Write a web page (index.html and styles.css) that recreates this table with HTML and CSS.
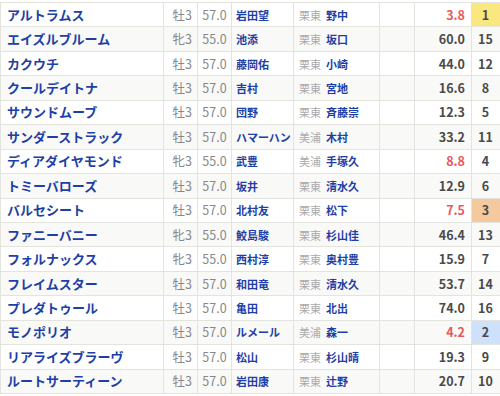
FILE: index.html
```html
<!DOCTYPE html>
<html lang="ja">
<head>
<meta charset="utf-8">
<link rel="stylesheet" href="styles.css">
</head>
<body>
<div class="wrap">
<table class="entries">
<colgroup>
<col class="c-name"><col class="c-sex"><col class="c-wt"><col class="c-jk"><col class="c-tr"><col class="c-blank"><col class="c-odds"><col class="c-pop">
</colgroup>
<tbody>
<tr><td class="name">アルトラムス</td><td class="sex">牡3</td><td class="wt">57.0</td><td class="jk">岩田望</td><td class="tr"><span class="loc">栗東</span><span class="trn">野中</span></td><td></td><td class="odds hot">3.8</td><td class="pop p1">1</td></tr>
<tr><td class="name">エイズルブルーム</td><td class="sex">牝3</td><td class="wt">55.0</td><td class="jk">池添</td><td class="tr"><span class="loc">栗東</span><span class="trn">坂口</span></td><td></td><td class="odds">60.0</td><td class="pop">15</td></tr>
<tr><td class="name">カクウチ</td><td class="sex">牡3</td><td class="wt">57.0</td><td class="jk">藤岡佑</td><td class="tr"><span class="loc">栗東</span><span class="trn">小崎</span></td><td></td><td class="odds">44.0</td><td class="pop">12</td></tr>
<tr><td class="name">クールデイトナ</td><td class="sex">牡3</td><td class="wt">57.0</td><td class="jk">吉村</td><td class="tr"><span class="loc">栗東</span><span class="trn">宮地</span></td><td></td><td class="odds">16.6</td><td class="pop">8</td></tr>
<tr><td class="name">サウンドムーブ</td><td class="sex">牡3</td><td class="wt">57.0</td><td class="jk">団野</td><td class="tr"><span class="loc">栗東</span><span class="trn">斉藤崇</span></td><td></td><td class="odds">12.3</td><td class="pop">5</td></tr>
<tr><td class="name">サンダーストラック</td><td class="sex">牡3</td><td class="wt">57.0</td><td class="jk">ハマーハン</td><td class="tr"><span class="loc">美浦</span><span class="trn">木村</span></td><td></td><td class="odds">33.2</td><td class="pop">11</td></tr>
<tr><td class="name">ディアダイヤモンド</td><td class="sex">牝3</td><td class="wt">55.0</td><td class="jk">武豊</td><td class="tr"><span class="loc">美浦</span><span class="trn">手塚久</span></td><td></td><td class="odds hot">8.8</td><td class="pop">4</td></tr>
<tr><td class="name">トミーバローズ</td><td class="sex">牡3</td><td class="wt">57.0</td><td class="jk">坂井</td><td class="tr"><span class="loc">栗東</span><span class="trn">清水久</span></td><td></td><td class="odds">12.9</td><td class="pop">6</td></tr>
<tr><td class="name">バルセシート</td><td class="sex">牡3</td><td class="wt">57.0</td><td class="jk">北村友</td><td class="tr"><span class="loc">栗東</span><span class="trn">松下</span></td><td></td><td class="odds hot">7.5</td><td class="pop p3">3</td></tr>
<tr><td class="name">ファニーバニー</td><td class="sex">牝3</td><td class="wt">55.0</td><td class="jk">鮫島駿</td><td class="tr"><span class="loc">栗東</span><span class="trn">杉山佳</span></td><td></td><td class="odds">46.4</td><td class="pop">13</td></tr>
<tr><td class="name">フォルナックス</td><td class="sex">牝3</td><td class="wt">55.0</td><td class="jk">西村淳</td><td class="tr"><span class="loc">栗東</span><span class="trn">奥村豊</span></td><td></td><td class="odds">15.9</td><td class="pop">7</td></tr>
<tr><td class="name">フレイムスター</td><td class="sex">牡3</td><td class="wt">57.0</td><td class="jk">和田竜</td><td class="tr"><span class="loc">栗東</span><span class="trn">清水久</span></td><td></td><td class="odds">53.7</td><td class="pop">14</td></tr>
<tr><td class="name">プレダトゥール</td><td class="sex">牡3</td><td class="wt">57.0</td><td class="jk">亀田</td><td class="tr"><span class="loc">栗東</span><span class="trn">北出</span></td><td></td><td class="odds">74.0</td><td class="pop">16</td></tr>
<tr><td class="name">モノポリオ</td><td class="sex">牡3</td><td class="wt">57.0</td><td class="jk">ルメール</td><td class="tr"><span class="loc">美浦</span><span class="trn">森一</span></td><td></td><td class="odds hot">4.2</td><td class="pop p2">2</td></tr>
<tr><td class="name">リアライズブラーヴ</td><td class="sex">牡3</td><td class="wt">57.0</td><td class="jk">松山</td><td class="tr"><span class="loc">栗東</span><span class="trn">杉山晴</span></td><td></td><td class="odds">19.3</td><td class="pop">9</td></tr>
<tr><td class="name">ルートサーティーン</td><td class="sex">牡3</td><td class="wt">57.0</td><td class="jk">岩田康</td><td class="tr"><span class="loc">栗東</span><span class="trn">辻野</span></td><td></td><td class="odds">20.7</td><td class="pop">10</td></tr>
</tbody>
</table>
</div>
</body>
</html>
```
FILE: styles.css
```css
html, body {
  margin: 0;
  padding: 0;
  background: #ffffff;
}
body {
  font-family: "Noto Sans CJK JP", "Noto Sans", sans-serif;
  width: 500px;
  height: 396px;
  overflow: hidden;
}
.wrap {
  padding-top: 2px;
}
.entries {
  border-collapse: collapse;
  table-layout: fixed;
  width: 501px;
}
.c-name { width: 163px; }
.c-sex { width: 34px; }
.c-wt { width: 34px; }
.c-jk { width: 62px; }
.c-tr { width: 86px; }
.c-blank { width: 35px; }
.c-odds { width: 57px; }
.c-pop { width: 30px; }
.entries td {
  border: 1px solid #e4e4df;
  height: 23.44px;
  padding: 0;
  vertical-align: middle;
  font-size: 11px;
  line-height: 14px;
  white-space: nowrap;
  overflow: hidden;
}
.entries tr:nth-child(even) td {
  background: #f9f9f8;
}
.entries td.name {
  font-size: 13px;
  font-weight: bold;
  color: #1d3fa6;
  padding-left: 6px;
}
.entries td.sex {
  color: #888888;
  font-size: 12.5px;
  text-align: right;
  padding-right: 5px;
}
.entries td.wt {
  color: #888888;
  font-size: 12.5px;
  text-align: center;
}
.entries td.jk {
  font-weight: bold;
  color: #1d3fa6;
  padding-left: 4px;
}
.entries td.tr {
  padding-left: 5px;
}
.loc {
  color: #aaaaaa;
  margin-right: 5px;
}
.trn {
  font-weight: bold;
  color: #1d3fa6;
}
.entries td.odds {
  text-align: right;
  font-weight: bold;
  color: #4a4a4a;
  font-size: 12.5px;
  padding-right: 6px;
}
.entries td.odds.hot {
  color: #e8585c;
}
.entries td.pop {
  text-align: center;
  font-weight: bold;
  color: #4a4a4a;
  font-size: 12.5px;
  padding-right: 2px;
}
.entries tr td.pop.p1 { background: #fbe77f; }
.entries tr td.pop.p2 { background: #cfe0fa; }
.entries tr td.pop.p3 { background: #f4c99d; }
```
